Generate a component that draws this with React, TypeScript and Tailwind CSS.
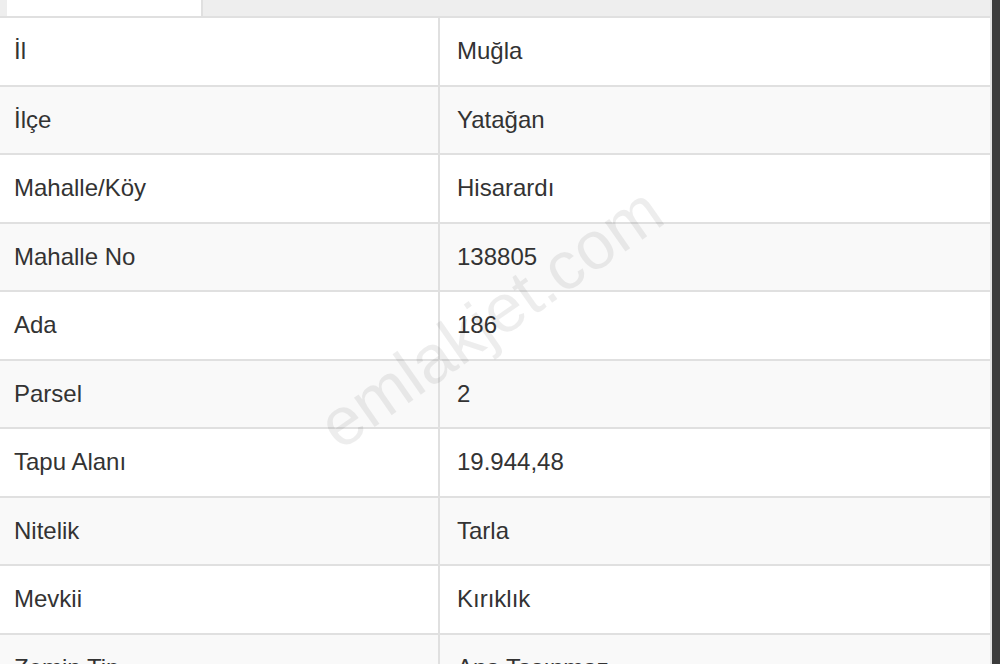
const rows: [string, string][] = [
  ["İl", "Muğla"],
  ["İlçe", "Yatağan"],
  ["Mahalle/Köy", "Hisarardı"],
  ["Mahalle No", "138805"],
  ["Ada", "186"],
  ["Parsel", "2"],
  ["Tapu Alanı", "19.944,48"],
  ["Nitelik", "Tarla"],
  ["Mevkii", "Kırıklık"],
  ["Zemin Tip", "Ana Taşınmaz"],
]

const App = () => {
  return (
    <div className="w-[1000px] h-[664px] overflow-hidden flex bg-white font-['Liberation_Sans',Arial,sans-serif] text-[#333]">
      <div className="relative flex-1 flex flex-col border-r-2 border-[#e2e2e2]">
        <div className="h-[16px] shrink-0 bg-[#eeeeee] flex">
          <div className="ml-[7px] w-[196px] bg-white border-r-2 border-[#e0e0e0]" />
        </div>
        <div className="h-[2px] shrink-0 bg-[#e0e0e0]" />
        {rows.map(([label, value], index) => (
          <div
            key={index}
            className={`h-[68.5px] shrink-0 flex border-b-2 border-[#e0e0e0] text-[24px] ${index % 2 === 1 ? "bg-[#f9f9f9]" : "bg-white"}`}
          >
            <div className="w-[440px] shrink-0 flex items-center pl-[14px] border-r-2 border-[#e0e0e0]">
              {label}
            </div>
            <div className="flex-1 flex items-center pl-[17px]">
              {value}
            </div>
          </div>
        ))}
        <div className="absolute left-[490px] top-[317px] -translate-x-1/2 -translate-y-1/2 -rotate-[35deg] text-[68px] text-black/[0.07] whitespace-nowrap pointer-events-none select-none">
          emlakjet.com
        </div>
      </div>
      <div className="w-[8px] shrink-0 bg-[#3b3b3b]" />
    </div>
  )
}

export default App
